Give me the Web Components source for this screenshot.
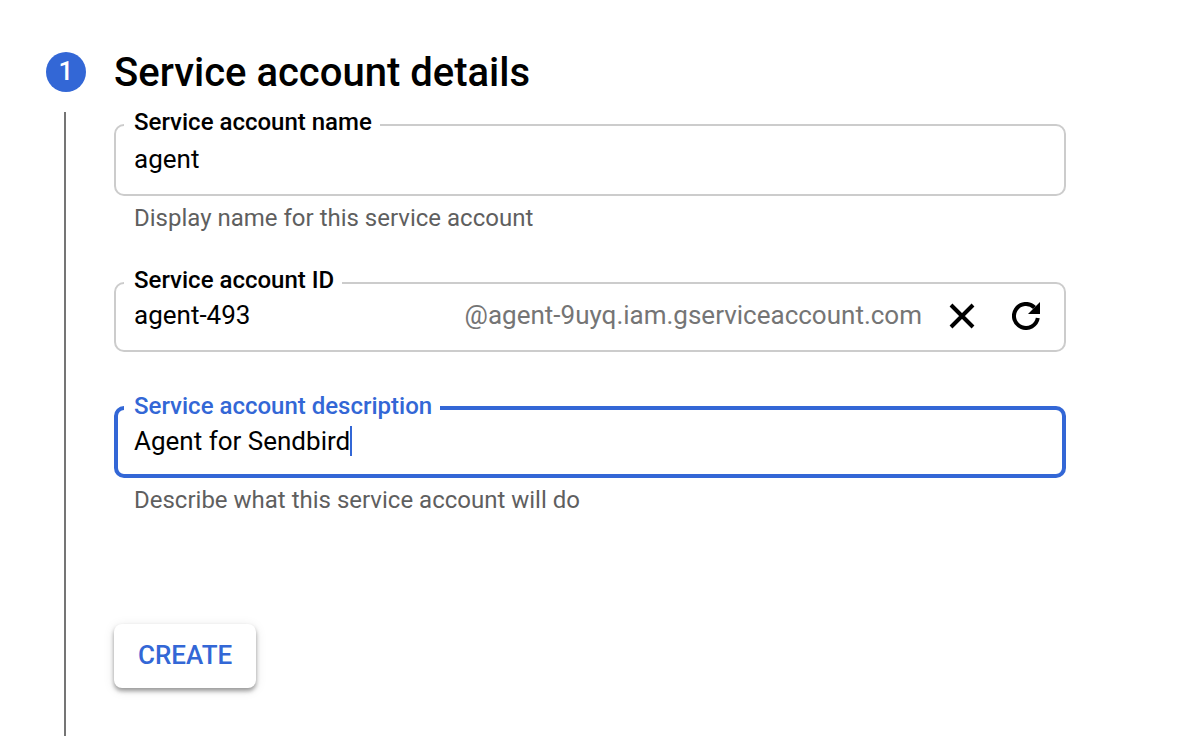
<!DOCTYPE html>
<html lang="en">
<head>
<meta charset="utf-8">
<meta name="viewport" content="width=device-width, initial-scale=1">
<title>Create service account</title>
<style>
  body { margin: 0; background: #fff; color: #000; font-family: Roboto, "Liberation Sans", sans-serif; }
  .id-field { --pad: 15px 18px 17px; margin-top: 50px; }
  .description-field { margin-top: 54px; }
  .create { margin-top: 110px; }
</style>
</head>
<body>
<wizard-step number="1" heading="Service account details">
  <text-field label="Service account name" value="agent" hint="Display name for this service account"></text-field>
  <text-field class="id-field" label="Service account ID" value="agent-493">
    <span slot="suffix">@agent-9uyq.iam.gserviceaccount.com</span>
    <icon-button slot="actions" icon="close" label="Clear"></icon-button>
    <icon-button slot="actions" icon="refresh" label="Regenerate ID"></icon-button>
  </text-field>
  <text-field class="description-field" active label="Service account description" value="Agent for Sendbird" hint="Describe what this service account will do"></text-field>
  <raised-button class="create">CREATE</raised-button>
</wizard-step>

<script>
class WizardStep extends HTMLElement {
  connectedCallback() {
    if (this.shadowRoot) return;
    const root = this.attachShadow({ mode: 'open' });
    root.innerHTML = `
      <style>
        :host { display: block; padding: 52px 124px 14px 46px; }
        section { display: grid; grid-template-columns: 40px 1fr; column-gap: 28px; }
        .rail { display: flex; flex-direction: column; align-items: center; gap: 20px; }
        .badge { width: 40px; height: 40px; border-radius: 50%; background: #3367d6; color: #fff;
          font-size: 26px; line-height: 38px; font-weight: 500; text-align: center; }
        .line { flex: 1; width: 2px; margin-right: 2px; background: #757575; }
        .content { min-width: 0; padding-bottom: 48px; }
        h2 { margin: 0 0 30px; font-size: 40px; line-height: 42px; font-weight: 500; }
      </style>
      <section>
        <div class="rail"><div class="badge"></div><div class="line"></div></div>
        <div class="content"><h2></h2><slot></slot></div>
      </section>`;
    root.querySelector('.badge').textContent = this.getAttribute('number');
    root.querySelector('h2').textContent = this.getAttribute('heading');
  }
}

class TextField extends HTMLElement {
  connectedCallback() {
    if (this.shadowRoot) return;
    const root = this.attachShadow({ mode: 'open' });
    root.innerHTML = `
      <style>
        :host { display: block; }
        .box { position: relative; display: flex; align-items: flex-start; box-sizing: border-box;
          padding: var(--pad, 17px 18px 19px); border: 2px solid #ccc; border-radius: 10px; }
        label { position: absolute; left: 8px; top: -18px; padding: 0 8px 0 10px; background: #fff;
          font-size: 24px; line-height: 28px; font-weight: 500; white-space: nowrap; }
        input { flex: 1; min-width: 0; height: 32px; box-sizing: border-box; padding: 0; border: 0; outline: 0;
          background: none; color: #000; font: 400 26px/32px Roboto, "Liberation Sans", sans-serif; }
        .caret { display: none; align-self: center; width: 2px; height: 30px; background: #3367d6; }
        .actions { display: flex; gap: 24px; margin-left: 20px; }
        :host([active]) .box { padding: 15px 16px 17px; border: 4px solid #3367d6; }
        :host([active]) label { left: 6px; color: #3367d6; }
        :host([active]) input { flex: none; field-sizing: content; max-width: 100%; }
        :host([active]) .caret { display: block; }
        ::slotted([slot=suffix]) { color: #757575; font-size: 26px; line-height: 32px; white-space: nowrap; }
        p { margin: 8px 20px 0; color: #5f5f5f; font-size: 24px; line-height: 28px; }
      </style>
      <div class="box">
        <label for="field"></label>
        <input id="field" type="text" autocomplete="off" spellcheck="false">
        <span class="caret" aria-hidden="true"></span>
        <slot name="suffix"></slot>
        <div class="actions"><slot name="actions"></slot></div>
      </div>`;
    root.querySelector('label').textContent = this.getAttribute('label');
    const input = root.querySelector('input');
    input.value = this.getAttribute('value') || '';
    if (this.hasAttribute('hint')) {
      const hint = document.createElement('p');
      hint.id = 'hint';
      hint.textContent = this.getAttribute('hint');
      root.append(hint);
      input.setAttribute('aria-describedby', 'hint');
    }
  }
}

const ICONS = {
  close: '<path d="M3 3 25 25M25 3 3 25" stroke="currentColor" stroke-width="4"/>',
  refresh: '<path d="M25.8 16A12 12 0 1 1 22.5 5.5" stroke="currentColor" stroke-width="4"/><path d="M28 0V12H16Z" fill="currentColor"/>'
};

class IconButton extends HTMLElement {
  connectedCallback() {
    if (this.shadowRoot) return;
    const root = this.attachShadow({ mode: 'open' });
    root.innerHTML = `
      <style>
        :host { display: block; }
        button { display: flex; align-items: center; justify-content: center; width: 40px; height: 34px;
          padding: 0; border: 0; background: none; color: #000; cursor: pointer; }
        svg { display: block; width: 28px; height: 28px; fill: none; }
      </style>
      <button type="button"><svg viewBox="0 0 28 28" aria-hidden="true">${ICONS[this.getAttribute('icon')]}</svg></button>`;
    root.querySelector('button').setAttribute('aria-label', this.getAttribute('label'));
  }
}

class RaisedButton extends HTMLElement {
  connectedCallback() {
    if (this.shadowRoot) return;
    const root = this.attachShadow({ mode: 'open' });
    root.innerHTML = `
      <style>
        :host { display: block; }
        button { display: block; padding: 15px 24px 17px; border: 0; border-radius: 8px; background: #fff; color: #3367d6;
          font: 500 26px/32px Roboto, "Liberation Sans", sans-serif; cursor: pointer;
          box-shadow: 0 3px 4px rgba(0,0,0,.36), 0 2px 12px rgba(0,0,0,.1); }
      </style>
      <button type="button"><slot></slot></button>`;
  }
}

customElements.define('wizard-step', WizardStep);
customElements.define('text-field', TextField);
customElements.define('icon-button', IconButton);
customElements.define('raised-button', RaisedButton);
</script>
</body>
</html>
